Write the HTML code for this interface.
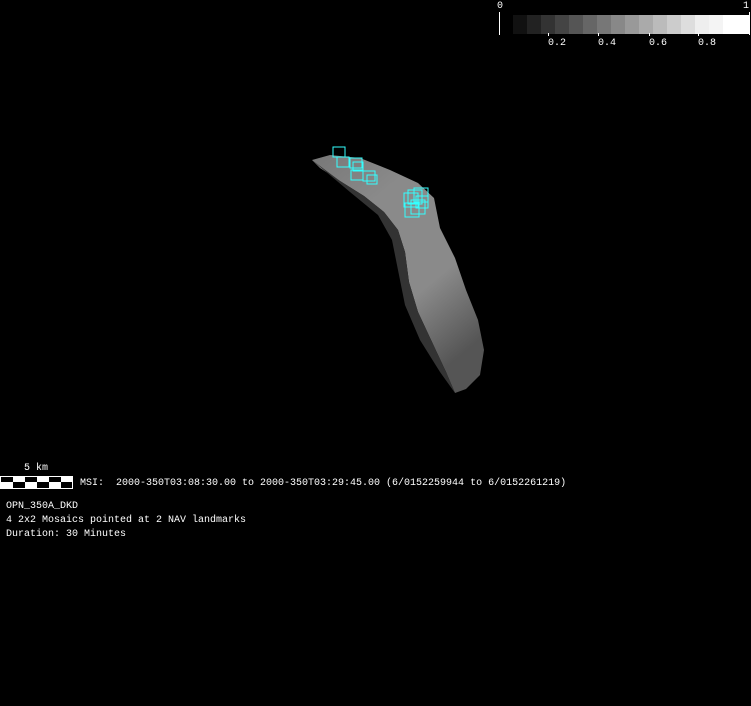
<!DOCTYPE html>
<html><head><meta charset="utf-8"><style>
html,body{margin:0;padding:0;background:#000;width:751px;height:706px;overflow:hidden}
.t{position:absolute;color:#fff;font-family:"Liberation Mono","DejaVu Sans Mono",monospace;font-size:10px;line-height:14px;white-space:pre}
</style></head><body>
<svg width="751" height="706" style="position:absolute;left:0;top:0">
<defs>
<linearGradient id="g" x1="0" y1="0" x2="0.6" y2="1">
<stop offset="0" stop-color="#777"/><stop offset="0.3" stop-color="#8a8a8a"/><stop offset="0.7" stop-color="#8a8a8a"/><stop offset="1" stop-color="#555"/>
</linearGradient>
</defs>
<path d="M312,160 L330,155 L360,158 L390,170 L418,183 L434,198 L440,228 L455,258 L466,290 L478,320 L484,350 L480,375 L466,389 L455,393 L446,372 L432,342 L418,312 L409,282 L405,252 L398,230 L384,212 L364,196 L340,181 L320,168 Z" fill="url(#g)"/>
<path d="M312,160 L340,181 L364,196 L384,212 L398,230 L405,252 L409,282 L418,312 L432,342 L446,372 L455,393 L440,372 L420,340 L405,305 L398,270 L392,240 L378,215 L350,192 Z" fill="#333"/>
<g fill="none" stroke="#3ff" stroke-width="1">
<rect x="333" y="147" width="12" height="10"/><rect x="337" y="157" width="12" height="10"/>
<rect x="350" y="158" width="12" height="10"/><rect x="353" y="162" width="10" height="9"/>
<rect x="351" y="170" width="12" height="10"/><rect x="363" y="171" width="12" height="10"/>
<rect x="367" y="175" width="10" height="9"/>
<rect x="404" y="193" width="14" height="14"/><rect x="408" y="190" width="14" height="14"/><rect x="414" y="188" width="14" height="14"/>
<rect x="405" y="203" width="14" height="14"/><rect x="411" y="200" width="14" height="14"/><rect x="416" y="196" width="12" height="12"/>
</g>
<g>
<rect x="513" y="15" width="14" height="19" fill="#111"/><rect x="527" y="15" width="14" height="19" fill="#222"/>
<rect x="541" y="15" width="14" height="19" fill="#333"/><rect x="555" y="15" width="14" height="19" fill="#444"/>
<rect x="569" y="15" width="14" height="19" fill="#555"/><rect x="583" y="15" width="14" height="19" fill="#666"/>
<rect x="597" y="15" width="14" height="19" fill="#777"/><rect x="611" y="15" width="14" height="19" fill="#888"/>
<rect x="625" y="15" width="14" height="19" fill="#999"/><rect x="639" y="15" width="14" height="19" fill="#aaa"/>
<rect x="653" y="15" width="14" height="19" fill="#bbb"/><rect x="667" y="15" width="14" height="19" fill="#ccc"/>
<rect x="681" y="15" width="14" height="19" fill="#ddd"/><rect x="695" y="15" width="14" height="19" fill="#eee"/>
<rect x="709" y="15" width="14" height="19" fill="#f4f4f4"/><rect x="723" y="15" width="26" height="19" fill="#fff"/>
</g>
<g stroke="#fff" stroke-width="1">
<line x1="499.5" y1="12" x2="499.5" y2="35"/><line x1="749.5" y1="12" x2="749.5" y2="35"/>
<line x1="548.5" y1="33" x2="548.5" y2="36"/><line x1="598.5" y1="33" x2="598.5" y2="36"/>
<line x1="649.5" y1="33" x2="649.5" y2="36"/><line x1="698.5" y1="33" x2="698.5" y2="36"/>
</g>
<rect x="0" y="476" width="73" height="13" fill="#fff"/>
<g fill="#000">
<rect x="1" y="477" width="12" height="5"/><rect x="25" y="477" width="12" height="5"/><rect x="49" y="477" width="12" height="5"/>
<rect x="13" y="482" width="12" height="6"/><rect x="37" y="482" width="12" height="6"/><rect x="61" y="482" width="11" height="6"/>
</g>
</svg>
<div class="t" style="left:497px;top:0px">0</div>
<div class="t" style="left:743px;top:0px">1</div>
<div class="t" style="left:548px;top:37px">0.2</div>
<div class="t" style="left:598px;top:37px">0.4</div>
<div class="t" style="left:649px;top:37px">0.6</div>
<div class="t" style="left:698px;top:37px">0.8</div>
<div class="t" style="left:24px;top:462px">5 km</div>
<div class="t" style="left:80px;top:477px">MSI:  2000-350T03:08:30.00 to 2000-350T03:29:45.00 (6/0152259944 to 6/0152261219)</div>
<div class="t" style="left:6px;top:500px">OPN_350A_DKD</div>
<div class="t" style="left:6px;top:514px">4 2x2 Mosaics pointed at 2 NAV landmarks</div>
<div class="t" style="left:6px;top:528px">Duration: 30 Minutes</div>
</body></html>
